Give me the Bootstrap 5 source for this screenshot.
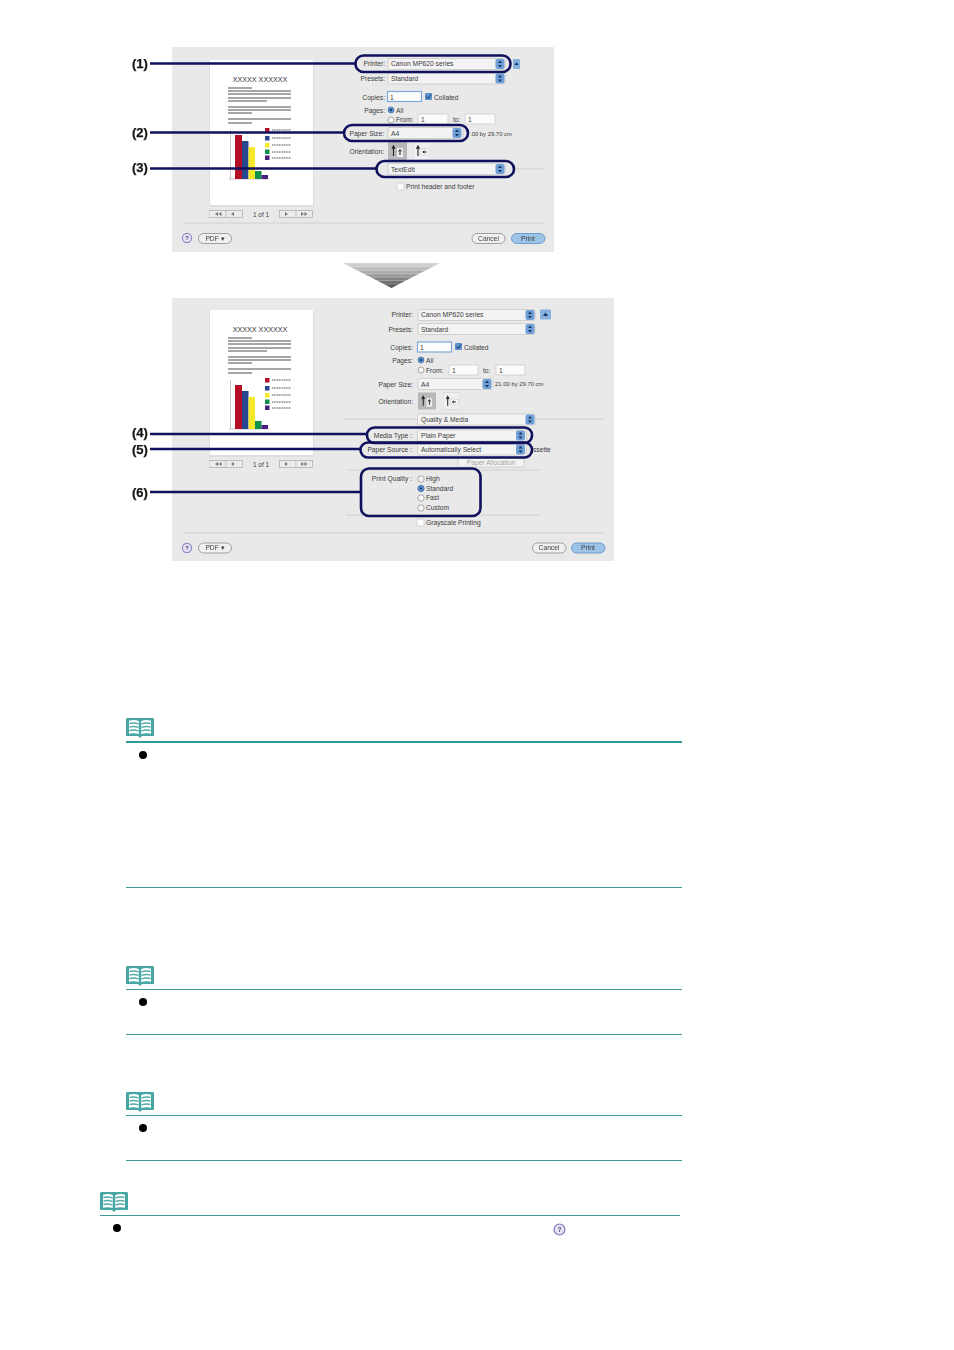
<!DOCTYPE html>
<html lang="en">
<head>
<meta charset="UTF-8">
<meta name="viewport" content="width=device-width, initial-scale=1.0">
<title>Print dialog settings</title>
<link href="https://cdn.jsdelivr.net/npm/bootstrap@5.3.0/dist/css/bootstrap.min.css" rel="stylesheet">
<script src="https://cdn.jsdelivr.net/npm/bootstrap@5.3.0/dist/js/bootstrap.bundle.min.js"></script>
<style>
    body { background: #fff; font-family: "Liberation Sans", Arial, sans-serif; }
    .manual-page { width: 954px; height: 1350px; overflow: hidden; }
    .shot { display: block; filter: blur(.5px); }
    .shot-one { margin: 40px 0 0 120px; }
    .shot-arrow { margin: 3px 0 0 343px; }
    .shot-two { margin: 10px 0 0 120px; }
    .shot text, .shot-defs text { font-family: "Liberation Sans", Arial, sans-serif; font-size: 6.7px; fill: #3c3c3c; }
    .shot text.r { text-anchor: end; }
    .shot text.num { font-size: 13px; font-weight: 700; fill: #151515; stroke: #151515; stroke-width: .25; }
    .shot text.dim { fill: #a4a4a4; }
    .shot text.btn-t { text-anchor: middle; }
    .shot text.tiny { font-size: 5.9px; }
    .shot-defs text.pv-title { font-size: 7.2px; text-anchor: middle; fill: #333; }
    .shot-defs text.pv-count { font-size: 6.4px; text-anchor: middle; }
    .shot-defs text.help-q { font-size: 6px; font-weight: 700; text-anchor: middle; fill: #3f3a80; }
    .bg { fill: #e9e9e9; }
    .pop { fill: #f3f3f3; stroke: #c4c4c4; stroke-width: .7; }
    .fld { fill: #fbfbfb; stroke: #c8c8c8; stroke-width: .7; }
    .fld-on { fill: #fdfdfd; stroke: #7fa9d8; stroke-width: 1.2; }
    .sep { stroke: #d0d0d0; stroke-width: 1; }
    .pill { fill: #f0f0f0; stroke: #8a8a8a; stroke-width: .8; }
    .pill-on { fill: #9cc3e8; stroke: #5f8fc0; stroke-width: .8; }
    .mark { fill: none; stroke: #10105c; stroke-width: 2.6; }
    .lead { stroke: #10105c; stroke-width: 2.6; }
    .rad { fill: #f6f6f6; stroke: #8a8a8a; stroke-width: .7; }
    .rad-on { fill: #5b8fcb; stroke: #3f6fa8; stroke-width: .7; }
    .note-box { width: 556px; margin-left: 126px; }
    .note-one { margin-top: 150px; height: 170px; }
    .note-two { margin-top: 78px; height: 69px; }
    .note-three { margin-top: 57px; height: 69px; }
    .note-four { width: 580px; margin: 31px 0 0 100px; }
    .note-icon { display: block; width: 28px; height: 20px; margin-bottom: 3px; filter: blur(.35px); }
    .note-rule { height: 2px; background: #2f9c9a; }
    .note-rule-thin { height: 1px; background: #3f9a98; }
    .note-end { border-bottom: 1px solid #3f9a98; }
    .note-dot { width: 8px; height: 8px; border-radius: 50%; background: #000; margin: 8px 0 0 13px; filter: blur(.4px); }
    .help-mark { display: block; width: 13px; height: 13px; margin: 7px 0 0 432px; filter: blur(.3px); }
</style>
</head>
<body class="m-0">
<svg class="d-none shot-defs" xmlns="http://www.w3.org/2000/svg">
    <symbol id="stepper" viewBox="0 0 10 11">
        <rect x=".5" y=".5" width="9" height="10" rx="2" fill="#6f9fd6"/>
        <path d="M5 2 7 4.500H3zM5 9 3 6.500h4z" fill="#16365f"/>
    </symbol>
    <symbol id="preview" viewBox="0 0 110 165">
        <rect x="0" y="1" width="105" height="146" fill="#dedede"/>
        <rect x="1" y="0" width="103" height="145" fill="#fff"/>
        <text class="pv-title" x="51" y="21.500">XXXXX XXXXXX</text>
        <path d="M19 28h24M19 31h63M19 34h63M19 38h63M19 41h39M19 47h63M19 50h63M19 53h24M19 59h63M19 63h24" stroke="#8a8a8a" stroke-width="1.400"/>
        <path d="M21.500 70v49M20 119h40" stroke="#b9a9b4" stroke-width=".7"/>
        <rect x="26" y="75" width="7" height="44" fill="#b40f26"/>
        <rect x="33" y="81" width="6.500" height="38" fill="#27478f"/>
        <rect x="39.500" y="87" width="6.500" height="32" fill="#f5e92a"/>
        <rect x="46" y="111" width="6.500" height="8" fill="#10904a"/>
        <rect x="52.500" y="115" width="6.500" height="4" fill="#4b1f80"/>
        <rect x="56" y="68" width="4.500" height="4.500" fill="#b40f26"/>
        <rect x="56" y="76" width="4.500" height="4.500" fill="#27478f"/>
        <rect x="56" y="83" width="4.500" height="4.500" fill="#f5e92a"/>
        <rect x="56" y="89.500" width="4.500" height="4.500" fill="#10904a"/>
        <rect x="56" y="95.500" width="4.500" height="4.500" fill="#4b1f80"/>
        <path d="M63 70h19M63 78h19M63 85h19M63 92h19M63 98h19" stroke="#555" stroke-width="1" stroke-dasharray="1.200 .5"/>
        <rect x="0" y="150.500" width="33.500" height="7" fill="#ececec" stroke="#a8a8a8" stroke-width=".7"/>
        <rect x="70.500" y="150.500" width="33" height="7" fill="#ececec" stroke="#a8a8a8" stroke-width=".7"/>
        <path d="M17 150.500v7M87 150.500v7" stroke="#a8a8a8" stroke-width=".6"/>
        <path d="M9 152l-3 2 3 2zM12.500 152l-3 2 3 2zM25 152l-3 2 3 2zM76 152l3 2-3 2zM92 152l3 2-3 2zM95.500 152l3 2-3 2z" fill="#777"/>
        <text class="pv-count" x="52" y="156.800">1 of 1</text>
    </symbol>
    <symbol id="orient-a" viewBox="0 0 19 18">
        <rect width="19" height="18" fill="#b8b8b8"/>
        <path d="M5.500 14V5M4 6.800 5.500 4 7 6.800" fill="none" stroke="#222" stroke-width="1.100"/>
        <rect x="9" y="6" width="6" height="9" fill="#eee"/>
        <path d="M12 13V8M10.700 9.500 12 7.500l1.300 2" fill="none" stroke="#222" stroke-width="1"/>
    </symbol>
    <symbol id="orient-b" viewBox="0 0 18 18">
        <rect width="18" height="18" fill="#efefef" stroke="#ccc" stroke-width=".6"/>
        <path d="M5 14V5M3.500 6.800 5 4l1.500 2.800" fill="none" stroke="#222" stroke-width="1.100"/>
        <rect x="8" y="7" width="8" height="6" fill="#fff" stroke="#aaa" stroke-width=".4"/>
        <path d="M10 10h4M11.500 8.700 9.800 10l1.700 1.300" fill="none" stroke="#222" stroke-width="1"/>
    </symbol>
    <symbol id="help-btn" viewBox="0 0 12 12">
        <circle cx="6" cy="6" r="5" fill="#e6e2f2" stroke="#8f88c8" stroke-width="1.300"/>
        <text class="help-q" x="6" y="8">?</text>
    </symbol>
    <symbol id="note-book" viewBox="0 0 28 20">
        <path d="M1.500 0h25A1.500 1.500 0 0 1 28 1.500V17a1 1 0 0 1-1 1H16l-2 2-2-2H1a1 1 0 0 1-1-1V1.500A1.500 1.500 0 0 1 1.500 0z" fill="#46a6a4"/>
        <path d="M3 2.800c3-1 7-1 9.800.3V16c-2.800-1-6.800-1-9.800-.3zM25 2.800c-3-1-7-1-9.800.3V16c2.800-1 6.800-1 9.800-.3z" fill="#fff"/>
        <path d="M3.500 5.500c3-.8 6-.6 9 .4M3.500 9c3-.8 6-.6 9 .4M3.500 12.500c3-.8 6-.6 9 .4M24.500 5.500c-3-.8-6-.6-9 .4M24.500 9c-3-.8-6-.6-9 .4M24.500 12.500c-3-.8-6-.6-9 .4" fill="none" stroke="#55aeac" stroke-width="1.400"/>
    </symbol>
</svg>

<div class="manual-page">
    <!-- first dialog, page setup tab -->
    <svg class="shot shot-one" width="440" height="220" viewBox="120 40 440 220" xmlns="http://www.w3.org/2000/svg">
        <rect class="bg" x="172" y="47" width="382" height="205"/>
        <use href="#preview" x="209" y="60" width="110" height="165"/>

        <line class="sep" x1="515" y1="169" x2="545" y2="169"/>
        <line class="sep" x1="183" y1="223" x2="545" y2="223"/>

        <text class="r" x="385" y="66">Printer:</text>
        <rect class="pop" x="388" y="58.500" width="117" height="11" rx="1"/>
        <text x="391" y="66">Canon MP620 series</text>
        <use href="#stepper" x="495" y="58.500" width="10" height="11"/>
        <rect x="513" y="59" width="7" height="10" rx="1" fill="#86b0de"/>
        <path d="M516.500 62l-2 3h4z" fill="#16365f"/>

        <text class="r" x="385" y="80.500">Presets:</text>
        <rect class="pop" x="388" y="73" width="117" height="11" rx="1"/>
        <text x="391" y="80.500">Standard</text>
        <use href="#stepper" x="495" y="73" width="10" height="11"/>

        <text class="r" x="385" y="99.500">Copies:</text>
        <rect class="fld-on" x="387.500" y="91.500" width="34" height="10"/>
        <text x="390" y="99.500">1</text>
        <rect x="425" y="93" width="7" height="7" rx="1" fill="#5b8fcb"/>
        <path d="M426.500 96.500l1.500 2 3-4" fill="none" stroke="#1a3a66" stroke-width="1"/>
        <text x="434" y="99.500">Collated</text>

        <text class="r" x="385" y="112.500">Pages:</text>
        <circle class="rad-on" cx="391" cy="110" r="3"/>
        <circle cx="391" cy="110" r="1.100" fill="#12305a"/>
        <text x="396" y="112.500">All</text>
        <circle class="rad" cx="391" cy="120" r="3"/>
        <text x="396" y="122">From:</text>
        <rect class="fld" x="418" y="114" width="30" height="10"/>
        <text x="421" y="122">1</text>
        <text x="453" y="122">to:</text>
        <rect class="fld" x="465" y="114" width="30" height="10"/>
        <text x="468" y="122">1</text>

        <text class="r" x="384" y="135.500">Paper Size:</text>
        <rect class="pop" x="388" y="127.500" width="75" height="11" rx="1"/>
        <text x="391" y="135.500">A4</text>
        <use href="#stepper" x="452" y="127.500" width="10" height="11"/>
        <text class="tiny" x="470" y="135.500">.00 by 29.70 cm</text>

        <text class="r" x="384" y="153.500">Orientation:</text>
        <use href="#orient-a" x="388" y="142" width="19" height="18"/>
        <use href="#orient-b" x="413" y="142" width="18" height="18"/>

        <rect class="pop" x="388" y="163.500" width="117" height="11" rx="1"/>
        <text x="391" y="171.500">TextEdit</text>
        <use href="#stepper" x="495" y="163.500" width="10" height="11"/>

        <rect class="fld" x="397" y="183" width="7" height="7" rx="1"/>
        <text x="406" y="189.200">Print header and footer</text>

        <use href="#help-btn" x="181.500" y="232.500" width="11" height="11"/>
        <rect class="pill" x="198.500" y="233.500" width="33" height="10" rx="5"/>
        <text class="btn-t" x="215" y="240.500">PDF ▾</text>
        <rect class="pill" x="472" y="233.500" width="33" height="10" rx="5"/>
        <text class="btn-t" x="488.500" y="240.500">Cancel</text>
        <rect class="pill-on" x="511.500" y="233.500" width="33.500" height="10" rx="5"/>
        <text class="btn-t" x="528" y="240.500">Print</text>

        <line class="lead" x1="150" y1="63.500" x2="355" y2="63.500"/>
        <line class="lead" x1="150" y1="132.500" x2="344" y2="132.500"/>
        <line class="lead" x1="150" y1="168.500" x2="376" y2="168.500"/>
        <rect class="mark" x="355.500" y="55.500" width="155" height="16.500" rx="8"/>
        <rect class="mark" x="344" y="125" width="124" height="16" rx="8"/>
        <rect class="mark" x="376.500" y="161" width="137.500" height="16" rx="8"/>
        <text class="num" x="132" y="68">(1)</text>
        <text class="num" x="132" y="137">(2)</text>
        <text class="num" x="132" y="172">(3)</text>
    </svg>

    <!-- arrow between the two dialogs -->
    <svg class="shot shot-arrow" width="97" height="25" viewBox="0 0 97 25" xmlns="http://www.w3.org/2000/svg">
        <defs>
            <linearGradient id="arrowFill" x1="0" y1="0" x2="0" y2="1">
                <stop offset="0" stop-color="#d8d8d8"/>
                <stop offset=".5" stop-color="#9a9a9a"/>
                <stop offset="1" stop-color="#4a4a4a"/>
            </linearGradient>
        </defs>
        <path d="M0 0H97L48.500 25z" fill="url(#arrowFill)"/>
        <path d="M0 3.500H97M0 7H97M0 10.500H97M0 14H97M0 17.500H97M0 21H97" stroke="#fff" stroke-opacity=".35" stroke-width=".8"/>
    </svg>

    <!-- second dialog, quality and media tab -->
    <svg class="shot shot-two" width="500" height="270" viewBox="120 298 500 270" xmlns="http://www.w3.org/2000/svg">
        <rect class="bg" x="172" y="298" width="442" height="263"/>
        <use href="#preview" x="209" y="310" width="110" height="165"/>

        <line class="sep" x1="343" y1="419" x2="604" y2="419"/>
        <line class="sep" x1="347" y1="470" x2="541" y2="470"/>
        <line class="sep" x1="346" y1="515" x2="541" y2="515"/>
        <line class="sep" x1="183" y1="533" x2="605" y2="533"/>

        <text class="r" x="413" y="317">Printer:</text>
        <rect class="pop" x="418" y="309.500" width="117" height="11" rx="1"/>
        <text x="421" y="317">Canon MP620 series</text>
        <use href="#stepper" x="525" y="309.500" width="10" height="11"/>
        <rect x="540" y="309.500" width="11" height="10" rx="1" fill="#86b0de"/>
        <path d="M545.500 312.500l-2.500 3.500h5z" fill="#16365f"/>

        <text class="r" x="413" y="331.500">Presets:</text>
        <rect class="pop" x="418" y="323.500" width="117" height="11" rx="1"/>
        <text x="421" y="331.500">Standard</text>
        <use href="#stepper" x="525" y="323.500" width="10" height="11"/>

        <text class="r" x="413" y="350">Copies:</text>
        <rect class="fld-on" x="417.500" y="342" width="34" height="10"/>
        <text x="420" y="350">1</text>
        <rect x="455" y="343" width="7" height="7" rx="1" fill="#5b8fcb"/>
        <path d="M456.500 346.500l1.500 2 3-4" fill="none" stroke="#1a3a66" stroke-width="1"/>
        <text x="464" y="350">Collated</text>

        <text class="r" x="413" y="363">Pages:</text>
        <circle class="rad-on" cx="421" cy="360" r="3"/>
        <circle cx="421" cy="360" r="1.100" fill="#12305a"/>
        <text x="426" y="363">All</text>
        <circle class="rad" cx="421" cy="370" r="3"/>
        <text x="426" y="372.500">From:</text>
        <rect class="fld" x="449" y="365" width="29" height="10"/>
        <text x="452" y="372.500">1</text>
        <text x="483" y="372.500">to:</text>
        <rect class="fld" x="496" y="365" width="29" height="10"/>
        <text x="499" y="372.500">1</text>

        <text class="r" x="413" y="386.500">Paper Size:</text>
        <rect class="pop" x="418" y="378.500" width="75" height="11" rx="1"/>
        <text x="421" y="386.500">A4</text>
        <use href="#stepper" x="482" y="378.500" width="10" height="11"/>
        <text class="tiny" x="495" y="386">21.00 by 29.70 cm</text>

        <text class="r" x="413" y="403.500">Orientation:</text>
        <use href="#orient-a" x="418" y="392" width="18" height="18"/>
        <use href="#orient-b" x="443" y="392" width="17" height="18"/>

        <rect class="pop" x="417.500" y="414" width="117.500" height="11" rx="1"/>
        <text x="421" y="421.500">Quality &amp; Media</text>
        <use href="#stepper" x="525" y="414" width="10" height="11"/>

        <text class="r" x="412" y="437.500">Media Type :</text>
        <rect class="pop" x="417.500" y="430" width="109" height="11" rx="1"/>
        <text x="421" y="437.500">Plain Paper</text>
        <use href="#stepper" x="515.500" y="430" width="10" height="11"/>

        <text class="r" x="412" y="451.500">Paper Source :</text>
        <rect class="pop" x="417.500" y="444" width="109" height="11" rx="1"/>
        <text x="421" y="451.500">Automatically Select</text>
        <use href="#stepper" x="515.500" y="444" width="10" height="11"/>
        <text x="533" y="451.500">ssette</text>

        <rect class="pop" x="458" y="457.500" width="66" height="9.500"/>
        <text class="btn-t dim" x="491" y="464.500">Paper Allocation</text>

        <text class="r" x="412" y="480.500">Print Quality :</text>
        <circle class="rad" cx="421" cy="479" r="3.200"/>
        <text x="426" y="481">High</text>
        <circle class="rad-on" cx="421" cy="488.500" r="3.200"/>
        <circle cx="421" cy="488.500" r="1.100" fill="#12305a"/>
        <text x="426" y="490.500">Standard</text>
        <circle class="rad" cx="421" cy="498" r="3.200"/>
        <text x="426" y="500">Fast</text>
        <circle class="rad" cx="421" cy="508" r="3.200"/>
        <text x="426" y="510">Custom</text>

        <rect class="fld" x="417" y="519" width="7" height="7" rx="1"/>
        <text x="426" y="525">Grayscale Printing</text>

        <use href="#help-btn" x="181.500" y="542.500" width="11" height="11"/>
        <rect class="pill" x="198.500" y="543" width="33" height="10" rx="5"/>
        <text class="btn-t" x="215" y="550">PDF ▾</text>
        <rect class="pill" x="532.500" y="543" width="33.500" height="10" rx="5"/>
        <text class="btn-t" x="549" y="550">Cancel</text>
        <rect class="pill-on" x="571.500" y="543" width="33.500" height="10" rx="5"/>
        <text class="btn-t" x="588" y="550">Print</text>

        <line class="lead" x1="150" y1="434" x2="367" y2="434"/>
        <line class="lead" x1="150" y1="449" x2="360" y2="449"/>
        <line class="lead" x1="150" y1="492" x2="361" y2="492"/>
        <rect class="mark" x="367" y="427.500" width="165" height="15.500" rx="7.500"/>
        <rect class="mark" x="360.500" y="442.500" width="171.500" height="15" rx="7.500"/>
        <rect class="mark" x="361" y="468.500" width="119.500" height="47.500" rx="8"/>
        <text class="num" x="132" y="437">(4)</text>
        <text class="num" x="132" y="453.500">(5)</text>
        <text class="num" x="132" y="496.500">(6)</text>
    </svg>

    <section class="note-box note-one note-end">
        <svg class="note-icon" viewBox="0 0 28 20" xmlns="http://www.w3.org/2000/svg"><use href="#note-book"/></svg>
        <div class="note-rule"></div>
        <div class="note-dot"></div>
    </section>

    <section class="note-box note-two note-end">
        <svg class="note-icon" viewBox="0 0 28 20" xmlns="http://www.w3.org/2000/svg"><use href="#note-book"/></svg>
        <div class="note-rule-thin"></div>
        <div class="note-dot"></div>
    </section>

    <section class="note-box note-three note-end">
        <svg class="note-icon" viewBox="0 0 28 20" xmlns="http://www.w3.org/2000/svg"><use href="#note-book"/></svg>
        <div class="note-rule-thin"></div>
        <div class="note-dot"></div>
    </section>

    <section class="note-four">
        <svg class="note-icon" viewBox="0 0 28 20" xmlns="http://www.w3.org/2000/svg"><use href="#note-book"/></svg>
        <div class="note-rule-thin"></div>
        <div class="d-flex align-items-start">
            <div class="note-dot"></div>
            <svg class="help-mark" viewBox="0 0 12 12" xmlns="http://www.w3.org/2000/svg"><use href="#help-btn"/></svg>
        </div>
    </section>
</div>
</body>
</html>
